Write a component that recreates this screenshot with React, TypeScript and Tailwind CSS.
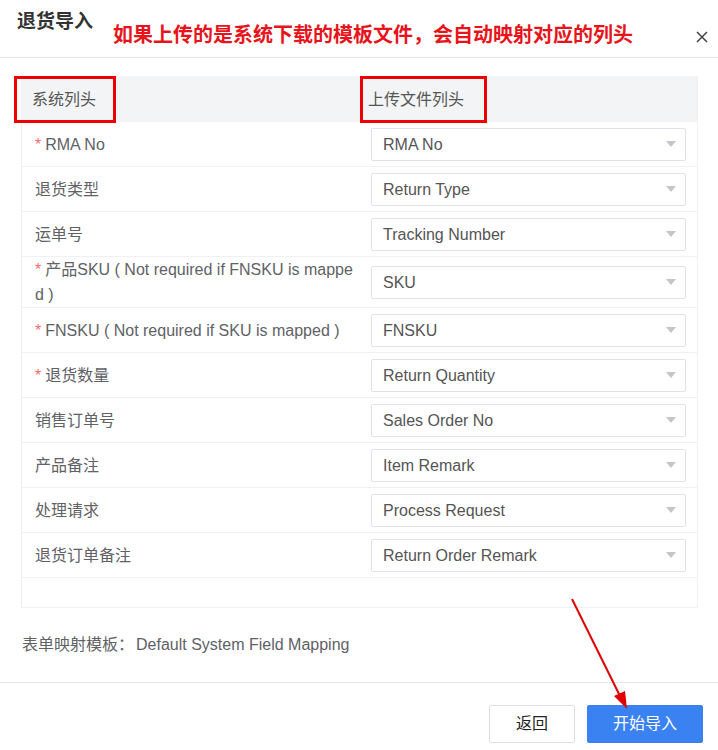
const rows: { label: string; value: string; required?: boolean; tall?: boolean }[] = [
  { label: 'RMA No', value: 'RMA No', required: true },
  { label: '退货类型', value: 'Return Type' },
  { label: '运单号', value: 'Tracking Number' },
  { label: '产品SKU ( Not required if FNSKU is mappe', value: 'SKU', required: true, tall: true },
  { label: 'FNSKU ( Not required if SKU is mapped )', value: 'FNSKU', required: true },
  { label: '退货数量', value: 'Return Quantity', required: true },
  { label: '销售订单号', value: 'Sales Order No' },
  { label: '产品备注', value: 'Item Remark' },
  { label: '处理请求', value: 'Process Request' },
  { label: '退货订单备注', value: 'Return Order Remark' },
];

const Select = ({ value }: { value: string }) => (
  <div className="flex h-[33px] w-[315px] items-center justify-between rounded-[2px] border border-[#dfe2e8] bg-white pl-[11px] pr-[9px]">
    <span className="pt-[2px] text-[16px] text-[#555]">{value}</span>
    <svg width="10" height="6" viewBox="0 0 10 6">
      <path d="M0 0 L10 0 L5 6 Z" fill="#c3c6cc" />
    </svg>
  </div>
);

export default function App() {
  return (
    <div className="relative flex h-[750px] w-[718px] flex-col bg-white font-['Liberation_Sans','Noto_Sans_CJK_SC',sans-serif] text-[#606266]">
      {/* header */}
      <div className="relative h-[58px] border-b border-[#e6e6e6]">
        <h1 className="pl-[17px] pt-[8px] text-[19px] font-bold leading-[28px] text-[#333]">退货导入</h1>
        <span className="absolute left-[113px] top-[21px] text-[20px] font-semibold leading-[26px] text-[#e8141b] font-['Noto_Sans_CJK_SC',serif]">
          如果上传的是系统下载的模板文件，会自动映射对应的列头
        </span>
        <svg className="absolute left-[696px] top-[31px]" width="12" height="12" viewBox="0 0 12 12">
          <path d="M1 1 L11 11 M11 1 L1 11" stroke="#444" strokeWidth="1.5" />
        </svg>
      </div>

      {/* mapping table */}
      <div className="ml-[21px] mt-[18px] w-[677px] border-x border-b border-[#eef0f3]">
        <div className="grid h-[46px] grid-cols-[349px_1fr] items-center bg-[#f2f4f5] pt-[2px] text-[16px] text-[#555]">
          <span className="pl-[10px]">系统列头</span>
          <span className="-ml-[3px]">上传文件列头</span>
        </div>
        {rows.map((r) => (
          <div
            key={r.value}
            className={`grid grid-cols-[349px_1fr] items-center border-b border-[#eef0f3] ${r.tall ? 'h-[51px]' : 'h-[45px]'}`}
          >
            <div className="whitespace-nowrap pl-[13px] text-[16px] leading-[25px]">
              {r.required && <span className="mr-[4px] text-[#f56c6c]">*</span>}
              {r.label}
              {r.tall && (
                <>
                  <br />d )
                </>
              )}
            </div>
            <Select value={r.value} />
          </div>
        ))}
        <div className="h-[29px]" />
      </div>

      {/* template */}
      <div className="flex pl-[22px] pt-[26px] text-[16px] leading-[22px]">
        <span className="w-[114px]">表单映射模板：</span>
        <span>Default System Field Mapping</span>
      </div>

      {/* footer */}
      <div className="mt-[26px] flex justify-end gap-[12px] border-t border-[#e6e6e6] pr-[15px] pt-[22px]">
        <button className="h-[38px] w-[86px] rounded-[2px] border border-[#dcdfe6] bg-white text-[16px] text-[#222]">返回</button>
        <button className="h-[38px] w-[116px] rounded-[2px] bg-[#3a82f2] text-[16px] text-white">开始导入</button>
      </div>

      {/* annotations */}
      <div className="pointer-events-none absolute left-[14px] top-[76px] h-[47px] w-[102px] border-[3px] border-[#ee0000]" />
      <div className="pointer-events-none absolute left-[360px] top-[76px] h-[47px] w-[127px] border-[3px] border-[#ee0000]" />
      <svg className="pointer-events-none absolute left-0 top-0" width="718" height="750">
        <line x1="572" y1="599" x2="620" y2="696" stroke="#e00000" strokeWidth="2" />
        <path d="M627 709 L614 696 L625 691 Z" fill="#e00000" />
      </svg>
    </div>
  );
}
